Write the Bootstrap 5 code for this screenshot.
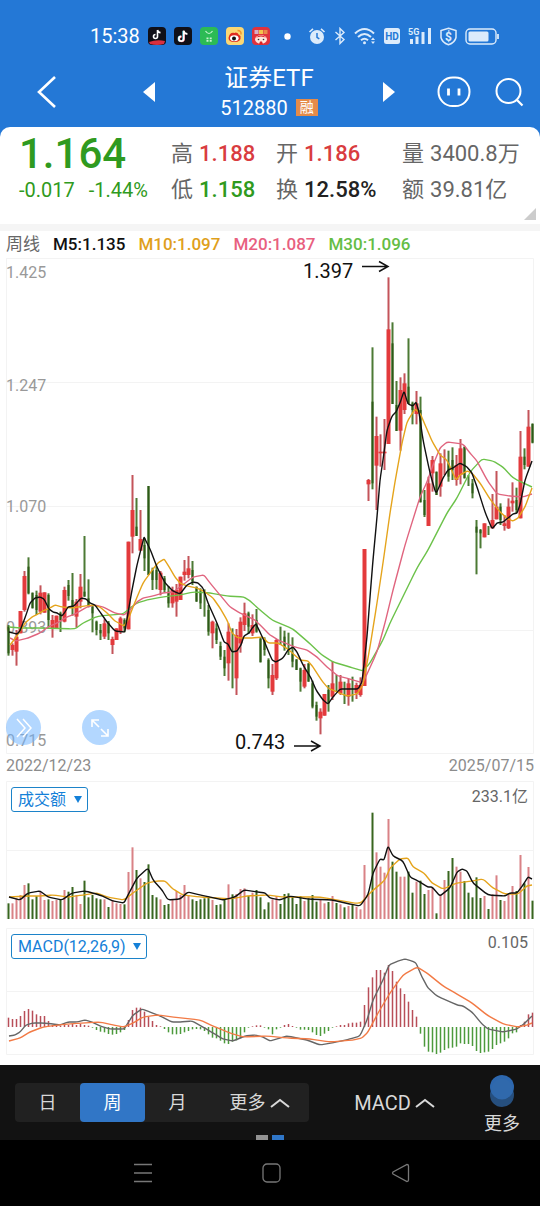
<!DOCTYPE html>
<html lang="zh-CN">
<head>
<meta charset="utf-8">
<meta name="viewport" content="width=device-width, initial-scale=1">
<title>证券ETF 512880</title>
<link href="https://cdn.jsdelivr.net/npm/bootstrap@5.3.0/dist/css/bootstrap.min.css" rel="stylesheet">
<style>
  :root { --blue: #2478d6; --up: #d93c40; --down: #2f9a20; }
  body { font-family: Roboto, "Noto Sans CJK SC", sans-serif; background: #fff; color: #222; line-height: 1.2; }
  svg { display: block; }
  button { background: none; border: 0; padding: 0; color: inherit; }
  .top-area { background: var(--blue); color: #fff; }
  .status { height: 56px; padding: 16px 41px 0 90px; font-size: 20px; }
  .status .apps { gap: 8px; margin-left: 8px; }
  .status .dot { margin-left: 14px; }
  .status .sys { color: #dcebfb; gap: 8px; }
  .title-bar { height: 71px; padding: 0 16px 0 36px; display: grid; grid-template-columns: 106px 1fr auto; }
  .title-bar .switcher { padding-right: 41px; }
  .title-bar h1 { font-size: 24px; line-height: 32px; }
  .code { font-size: 20px; line-height: 28px; }
  .tag { background: #e58b49; font-size: 14px; line-height: 17px; padding: 0 4px; }
  .quote { background: #fff; color: #222; border-radius: 10px 10px 0 0; height: 97px; padding: 5px 6px 0 19px; font-size: 22px;
    display: grid; grid-template-columns: 152fr 105fr 126fr 132fr; grid-template-rows: 44px 28px; align-items: center; font-weight: 500; }
  .quote dl { display: flex; align-items: center; gap: 6px; margin: 0; }
  .quote dt { font-weight: 400; color: #666; }
  .quote dd { margin: 0; white-space: nowrap; }
  .price { font-size: 42px; line-height: 44px; color: var(--down); }
  .change { font-size: 20px; gap: 14px; color: var(--down); font-weight: 400; }
  .up { color: var(--up); } .down { color: var(--down); } .dim { color: #666; font-weight: 400; }
  .corner { right: 4px; bottom: 4px; }
  .band { height: 7px; background: #f5f5f5; }
  .legend-row { height: 27px; padding: 0 6px; font-size: 17px; gap: 13px; font-weight: 500; white-space: nowrap; }
  .dates { height: 27px; padding: 0 6px 4px; font-size: 16px; color: #8c8c8c; }
  .round { width: 35px; height: 35px; border-radius: 50%; background: rgba(110,178,255,.52); display: grid; place-items: center; }
  .rounds { left: 6px; bottom: 9px; gap: 41px; }
  .picker { left: 11px; top: 6px; }
  .picker select { appearance: none; height: 25px; border: 1px solid #1c83c9; border-radius: 3px; background: #fff; color: #1480d8; font-size: 16px; line-height: 22px; padding: 0 20px 0 6px; }
  .picker svg { right: 6px; top: 9px; pointer-events: none; }
  .macd-wrap { margin-top: 9px; padding-bottom: 10px; }
  .axis { font-size: 16px; fill: #999; }
  .reading { font-size: 16px; fill: #666; text-anchor: end; }
  .callout { font-size: 20px; fill: #111; }
  .toolbar { background: #121212; color: #d8d8d8; height: 75px; padding: 0 16px 0 15px; font-size: 18px; }
  .seg { background: #212121; border-radius: 4px; height: 39px; width: 294px; }
  .seg button { flex: 65; border-radius: 4px; }
  .seg button:last-child { flex: 99; }
  .seg .current { background: #3176c6; color: #fff; }
  .ind { font-size: 20px; }
  .more { width: 44px; line-height: 22px; gap: 6px; padding-top: 4px; }
  .pages { gap: 4px; bottom: 0; }
  .pages i { width: 12px; height: 5px; background: #929292; }
  .pages i + i { background: #2f76c8; }
  .sysnav { background: #000; height: 66px; gap: 109px; padding-left: 4px; }
</style>
</head>
<body>
<div class="min-vh-100 d-flex flex-column">
<header class="top-area">
  <div class="status d-flex align-items-center">
    <span>15:38</span>
    <div class="apps d-flex">
      <svg width="18" height="18" viewBox="0 0 18 18"><rect width="18" height="18" rx="4" fill="#101018"/><path d="M9.5 3v6.5a2 2 0 1 1-2-2M9.5 3q.6 2.5 3 2.6" fill="none" stroke="#fff" stroke-width="1.6"/><path d="M1 15q8-3 16-1l-1 3q-7 2-14 0z" fill="#d93040"/></svg>
      <svg width="18" height="18" viewBox="0 0 18 18"><rect width="18" height="18" rx="4" fill="#101018"/><path d="M9.2 4v7.8a2.4 2.4 0 1 1-2.4-2.4" fill="none" stroke="#3ce" stroke-width="1.6"/><path d="M10.2 4v8a2.4 2.4 0 1 1-2.4-2.4" fill="none" stroke="#e45" stroke-width="1.6"/><path d="M9.7 3.5v8.3a2.4 2.4 0 1 1-2.4-2.4M9.7 4q.7 2.8 3.7 3" fill="none" stroke="#fff" stroke-width="1.8"/></svg>
      <svg width="18" height="18" viewBox="0 0 18 18"><rect width="18" height="18" rx="4" fill="#2cbb55"/><path d="M5.5 4q3.5 5 7 0" fill="none" stroke="#c8f3d2" stroke-width="1.2"/><path d="M6.5 10.500h2v1.800h-2zM9.700 10.500h2v1.800h-2zM6.500 13h2v1.800h-2zM9.700 13h2v1.800h-2z" fill="#c8f3d2"/></svg>
      <svg width="18" height="18" viewBox="0 0 18 18"><rect width="18" height="18" rx="4" fill="#fbd774"/><path d="M2.500 11q1-6 6-5 1-1 3 0 1 2 3 3 1 6-6 6-6 0-6-4" fill="#e02b20"/><ellipse cx="8.300" cy="11.300" rx="4.300" ry="3" fill="#fff"/><circle cx="8" cy="11.500" r="2" fill="#111"/><path d="M11.500 3.500q4 0 3.500 4" fill="none" stroke="#f0962a" stroke-width="1.500"/></svg>
      <svg width="18" height="18" viewBox="0 0 18 18"><rect width="18" height="18" rx="4" fill="#e0323e"/><path d="M2.500 3h4v4h-4z" fill="#d8b0c8"/><path d="M7 3h4v4H7z" fill="#f3c24c"/><path d="M11.500 3h4v4h-4z" fill="#e98a4a"/><ellipse cx="9" cy="12.500" rx="6" ry="4.200" fill="#ffe3dc"/><path d="M4 10.500q5-4 10 0l-5-1z" fill="#d22"/><path d="M8 14.500h2l1 3H7z" fill="#d22"/><circle cx="6.500" cy="12.500" r=".8" fill="#333"/><circle cx="11.500" cy="12.500" r=".8" fill="#333"/></svg>
    </div>
    <svg class="dot" width="7" height="7" viewBox="0 0 7 7"><circle cx="3.500" cy="3.500" r="3.200" fill="#fff"/></svg>
    <div class="sys d-flex align-items-center ms-auto">
      <svg width="18" height="18" viewBox="0 0 18 18"><circle cx="9" cy="10" r="7" fill="currentColor"/><path d="M1.500 5 5 1.800M16.500 5 13 1.800" stroke="currentColor" stroke-width="1.600"/><path d="M9 6v4.300l2.300 1.500" fill="none" stroke="#2478d6" stroke-width="1.500"/></svg>
      <svg width="12" height="18" viewBox="0 0 12 18"><path d="M1.500 5 10 12.500 6 16.500v-15L10 5.500 1.500 13" fill="none" stroke="currentColor" stroke-width="1.400"/></svg>
      <svg width="22" height="18" viewBox="0 0 22 18" fill="none" stroke="currentColor" stroke-width="2"><path d="M1 6.500q9.500-9 19 0M4 10q6.500-6 13 0M7 13.200q3.500-3 7 0"/><circle cx="10.500" cy="15.700" r="1.500" fill="currentColor" stroke="none"/><path d="m17 13 2-2.500 2 2.500zM17 14.500l2 2.500 2-2.500z" fill="currentColor" stroke="none"/></svg>
      <svg width="16" height="16" viewBox="0 0 16 16"><rect width="16" height="16" rx="2.500" fill="currentColor"/><text x="8" y="12" text-anchor="middle" font-size="10" font-weight="700" fill="#2478d6">HD</text></svg>
      <svg width="24" height="18" viewBox="0 0 24 18" fill="currentColor"><text x="0" y="8" font-size="9" font-weight="700">5G</text><path d="M2 12h3v5H2zM7.500 9.500h3V17h-3zM13.500 5h3v12h-3zM20 1h3v16h-3z"/></svg>
      <svg width="17" height="19" viewBox="0 0 17 19"><path d="M8.500 1.200 16 3.500v7q-1 5-7.500 7.300Q2 15.500 1 10.500v-7z" fill="none" stroke="currentColor" stroke-width="1.500"/><text x="8.500" y="13.500" text-anchor="middle" font-size="12" font-weight="700" fill="currentColor">$</text></svg>
      <svg width="34" height="17" viewBox="0 0 34 17"><rect x="1" y="1" width="30" height="15" rx="4" fill="none" stroke="currentColor" stroke-width="1.400"/><rect x="3.500" y="3.500" width="20" height="10" rx="1.500" fill="currentColor"/><path d="M33 6v5" stroke="currentColor" stroke-width="1.800"/></svg>
    </div>
  </div>
  <nav class="title-bar align-items-center">
    <button aria-label="返回"><svg width="22" height="34" viewBox="0 0 22 34"><path d="M19 2 3 17l16 15" fill="none" stroke="#fff" stroke-width="2.600"/></svg></button>
    <div class="switcher d-flex align-items-center justify-content-between">
      <button aria-label="上一个"><svg width="14" height="20" viewBox="0 0 14 20"><path d="M13 0v20L1 10z" fill="#fff"/></svg></button>
      <div class="text-center">
        <h1 class="m-0 fw-normal">证券ETF</h1>
        <div class="code d-flex align-items-center justify-content-center gap-2"><span>512880</span><span class="tag">融</span></div>
      </div>
      <button aria-label="下一个"><svg width="14" height="20" viewBox="0 0 14 20"><path d="M1 0v20l12-10z" fill="#fff"/></svg></button>
    </div>
    <div class="d-flex align-items-center gap-4">
      <button aria-label="助手"><svg width="34" height="32" viewBox="0 0 34 32"><rect x="1.500" y="1.500" width="31" height="28.500" rx="14.200" fill="none" stroke="#fff" stroke-width="2"/><path d="M11.500 12.500v7M22 12.500v7" stroke="#fff" stroke-width="2.800"/></svg></button>
      <button aria-label="搜索"><svg width="29" height="30" viewBox="0 0 29 30"><circle cx="13.500" cy="14" r="12" fill="none" stroke="#fff" stroke-width="2"/><path d="m21.500 22.500 6 6" stroke="#fff" stroke-width="2.200"/></svg></button>
    </div>
  </nav>
  <section class="quote position-relative">
    <div class="price">1.164</div>
    <dl><dt>高</dt><dd class="up">1.188</dd></dl>
    <dl><dt>开</dt><dd class="up">1.186</dd></dl>
    <dl><dt>量</dt><dd class="dim">3400.8万</dd></dl>
    <div class="change d-flex"><span>-0.017</span><span>-1.44%</span></div>
    <dl><dt>低</dt><dd class="down">1.158</dd></dl>
    <dl><dt>换</dt><dd>12.58%</dd></dl>
    <dl><dt>额</dt><dd class="dim">39.81亿</dd></dl>
    <svg class="corner position-absolute" width="12" height="12" viewBox="0 0 12 12"><path d="M12 0v12H0z" fill="#ccc"/></svg>
  </section>
</header>
<div class="band"></div>
<main>
  <div class="legend-row d-flex align-items-center">
    <span class="dim">周线</span><span style="color:#111">M5:1.135</span><span style="color:#dfa01c">M10:1.097</span><span style="color:#e8607f">M20:1.087</span><span style="color:#65bd45">M30:1.096</span>
  </div>
  <section class="position-relative">
    <svg id="kline" class="w-100" viewBox="0 258 540 496" role="img" aria-label="周线K线图">
      <path d="M6.500 258v495.500h527V258.500H6M6.500 382.500h527M6.500 506.500h527M6.500 630.500h527" fill="none" stroke="#f3f3f3"/>
      <g class="axis"><text x="6" y="278">1.425</text><text x="6" y="391">1.247</text><text x="6" y="512">1.070</text><text x="6" y="633">0.893</text><text x="6" y="746">0.715</text></g>
      <g class="callout"><text x="303" y="278">1.397</text><text x="235" y="749">0.743</text></g>
      <path d="M362 266.500h26m-9-5 9 5-9 5M294 746h26m-9-5 9 5-9 5" fill="none" stroke="#111" stroke-width="1.500"/>
    </svg>
    <div class="rounds position-absolute d-flex">
      <button class="round" aria-label="展开"><svg width="20" height="22" viewBox="0 0 20 22" fill="none" stroke="#fff" stroke-width="1.500"><path d="m3 2 8 9-8 9M9 2l8 9-8 9"/></svg></button>
      <button class="round" aria-label="全屏"><svg width="20" height="20" viewBox="0 0 20 20" fill="none" stroke="#fff" stroke-width="1.600"><path d="M2 9V2h7M2 2l7 7M18 11v7h-7M18 18l-7-7"/></svg></button>
    </div>
  </section>
  <div class="dates d-flex justify-content-between align-items-center"><span>2022/12/23</span><span>2025/07/15</span></div>
  <section class="position-relative">
    <svg id="volume" class="w-100" viewBox="0 781 540 138" role="img" aria-label="成交额">
      <path d="M6.500 919V781.500h527V919M6.500 850.500h527" fill="none" stroke="#f3f3f3"/>
      <text class="reading" x="528" y="802">233.1亿</text>
    </svg>
    <div class="picker position-absolute"><select aria-label="副图指标一"><option>成交额</option></select><svg class="position-absolute" width="8" height="7" viewBox="0 0 8 7"><path d="M0 0h8L4 7z" fill="#1480d8"/></svg></div>
  </section>
  <section class="macd-wrap position-relative">
    <svg id="macd" class="w-100" viewBox="0 928 540 127" role="img" aria-label="MACD">
      <path d="M6.500 928.500h527v126H6.500zM6.500 991.500h527" fill="none" stroke="#f3f3f3"/>
      <text class="reading" x="528" y="948">0.105</text>
    </svg>
    <div class="picker position-absolute"><select aria-label="副图指标二"><option>MACD(12,26,9)</option></select><svg class="position-absolute" width="8" height="7" viewBox="0 0 8 7"><path d="M0 0h8L4 7z" fill="#1480d8"/></svg></div>
  </section>
</main>
<footer class="mt-auto">
  <div class="toolbar d-flex align-items-center justify-content-between position-relative">
    <div class="seg d-flex">
      <button>日</button><button class="current">周</button><button>月</button>
      <button class="d-flex align-items-center justify-content-center gap-1">更多<svg width="20" height="12" viewBox="0 0 20 12"><path d="m1 10 9-7 9 7" fill="none" stroke="#d8d8d8" stroke-width="2"/></svg></button>
    </div>
    <button class="ind d-flex align-items-center gap-1">MACD<svg width="20" height="12" viewBox="0 0 20 12"><path d="m1 10 9-7 9 7" fill="none" stroke="#d8d8d8" stroke-width="2"/></svg></button>
    <button class="more d-flex flex-column align-items-center"><svg width="24" height="32" viewBox="0 0 24 32"><circle cx="12" cy="20" r="12" fill="#264f7e"/><circle cx="12" cy="12" r="12" fill="#2d67ae"/><circle cx="12" cy="14" r="10.500" fill="#3069ac"/></svg>更多</button>
    <div class="pages position-absolute start-50 translate-middle-x d-flex"><i></i><i></i></div>
  </div>
  <nav class="sysnav d-flex align-items-center justify-content-center">
    <button aria-label="菜单"><svg width="20" height="20" viewBox="0 0 20 20"><path d="M1 1.500h18M1 10h18M1 18.500h18" stroke="#777" stroke-width="1.300"/></svg></button>
    <button aria-label="主页"><svg width="20" height="20" viewBox="0 0 20 20"><rect x="1" y="1" width="17" height="18" rx="4" fill="none" stroke="#777" stroke-width="1.300"/></svg></button>
    <button aria-label="后退"><svg width="20" height="20" viewBox="0 0 20 20"><path d="M16 1.500q1.500 0 1.500 1.500v14q0 1.500-1.500 1.500L2 11q-1-1 0-2z" fill="none" stroke="#777" stroke-width="1.300"/></svg></button>
  </nav>
</footer>
</div>
<script src="https://cdn.jsdelivr.net/npm/bootstrap@5.3.0/dist/js/bootstrap.bundle.min.js"></script>
<script>
// Candles: colour, high, low, body top, body bottom, in thirds of a unit below each block's top.
const blocks = [
  [470, `g 465 557 470 550,r 520 557 525 540,r 480 587 500 545,r 423 490,r 303 425 318 420,g 262 373 290 370,g 368 415,g 362 435 375 420,r 346 433 368 425,r 367 428,g 370 473 375 450,r 435 503 450 475,r 437 475,g 425 486 430 450,r 350 457 360 455,g 330 392 345 378,g 309 437 390 410,r 387 473 395 440,r 312 415 350 395,g 198 380 365 380,g 328 412 385 405,g 405 487 410 430,g 452 496 455 480,g 462 510 480 490,r 448 507 460 500,g 453 510 458 490,r 500 552 507 525,r 475 510,r 440 492 445 485,g 445 487 450 475,r 215 478,r 15 250 120 200,g 84 198 170 198,r 120 242 207 242,g 205 303 225 265,g 48 315,g 293 360 300 330,g 290 358 300 330,r 303 376 308 360,g 318 367 325 360,g 348 413 365 400,r 350 413 360 400,r 342 440 360 395`],
  [560, `r 50 120,r 0 62 35 45,r -12 55 25 45,g 3 75 30 65,g 80 125,g 85 147 95 130,g 88 170 100 100,g 135 227 150 215,r 182 265 185 220,g 190 252 205 240,g 245 300 258 290,g 270 348 290 325,r 190 362 215 310,g 205 385 240 240,r 207 405 225 355,r 172 278 185 250,r 128 213 160 195,g 155 222 160 200,r 163 228 195 220,g 147 218 180 215,g 235 307,g 232 287 240 270,g 295 385 300 355,r 312 405 345 395,r 237 360 240 355,g 200 255 210 210,g 212 272 230 262,g 218 285 230 230,g 232 322 280 305,g 298 330,g 323 395 325 365,r 312 385 330 380,g 310 365,g 362 445 370 440,g 425 482 435 470,r 445 523 455 475,r 402 467,g 375 455 390 430,r 303 420 370 410,g 345 395 350 350,r 345 405 365 400,g 365 432 370 370,r 357 437 370 410,g 350 425 360 360,r 368 417 375 400,r 352 410 375 405,r -33 378`],
  [260, `r 657 723 660 673,g 262 688 425 670,r 470 750 528 617,r 523 620 575 580,r 477 630 575 580,r 52 552 208 552,g 187 432 250 432,g 363 513 435 513,r 352 572 390 512,r 340 462 370 450,g 235 432 380 432,g 425 493 430 450,r 393 493 430 462,g 410 727 450 727,g 690 771 720 765,r 650 798 670 798,r 588 695 600 640,g 635 705,r 580 710 610 680,r 568 645 600 600,g 572 665 610 650,g 562 660 600 630,r 585 677 615 660,r 537 673 565 645,g 560 655,g 645 678 655 655,g 657 715 670 700`],
  [480, `g 120 283 140 158,g 147 205 150 160,r 130 172,g 138 165 145 145,r 42 145 120 145,r -27 118 80 118,g 70 135 80 120,r 105 152 130 138,r 55 147 80 145,r 7 95 62 70,g 23 100 60 90,r -147 115 -70 115,g -95 -32 -70 -45,r -210 -40 -160 -40,g -170 -110 -168 -112`]
];
const candles = blocks.flatMap(([top, rows]) => rows.split(',').map(r => {
  const [c, ...v] = r.split(' ');
  const y = v.map(n => top + n / 3);
  return { c, hi: y[0], lo: y[1], a: y[2] ?? y[0], b: y[3] ?? y[1] };
}));
const NS = 'http://www.w3.org/2000/svg';
const add = (id, tag, attrs) => {
  const el = document.createElementNS(NS, tag);
  for (const k in attrs) el.setAttribute(k, attrs[k]);
  document.getElementById(id).appendChild(el);
};
const bar = (id, i, y1, y2, w, fill) => add(id, 'rect', { x: 8.5 + 4 * i - w / 2, y: Math.min(y1, y2), width: w, height: Math.abs(y2 - y1), fill });
// Line through "x,y" points, its corners slightly rounded.
const line = (id, pts, stroke, w = 1.4) => {
  const p = pts.trim().split(/\s+/).map(s => s.split(',').map(Number));
  const mix = (a, b, t) => [a[0] + (b[0] - a[0]) * t, a[1] + (b[1] - a[1]) * t];
  let d = `M${p[0]}`;
  for (let i = 1; i < p.length - 1; i++) d += `L${mix(p[i], p[i - 1], .2)}Q${p[i]} ${mix(p[i], p[i + 1], .2)}`;
  add(id, 'path', { d: d + `L${p[p.length - 1]}`, fill: 'none', stroke, 'stroke-width': w, 'stroke-linejoin': 'round' });
};
candles.forEach((k, i) => {
  const g = k.c === 'g';
  bar('kline', i, k.hi, k.lo, 2, g ? '#4c7a35' : '#c4545a');
  bar('kline', i, k.a, k.b, g ? 2 : 4, g ? '#2d5a17' : '#e33a3c');
});
line('kline', '9,627 20,628 43,628 75,629 83,623 98,616 123,614 130,608 137,603 147,600 162,597 180,595 193,592 210,593 227,596 244,597 250,601 260,610 272,620 293,629 308,642 322,655 333,662 350,667 363,671 370,663 383,640 390,623 417,568 428,550 447,513 457,498 470,472 482,459 493,461 503,467 513,478 532,487', '#6cc24a');
line('kline', '10,638 16,641 28,638 40,633 48,627 57,623 67,617 75,614 87,607 95,605 103,607 115,613 124,615 130,610 137,602 143,598 153,596 163,593 173,592 180,587 193,577 204,575 210,583 220,595 230,607 240,613 255,620 262,627 270,635 280,641 295,647 307,650 317,657 327,667 338,676 350,679 363,683 377,652 385,623 393,590 405,545 420,497 427,482 433,465 440,448 447,442 463,444 470,453 477,461 487,480 497,494 510,496 523,497 532,494', '#e0657f');
line('kline', '10,645 17,636 25,623 32,617 38,614 43,611 50,608 55,605 62,607 72,608 78,607 92,605 100,607 107,613 115,621 124,626 128,620 135,602 143,583 153,569 158,563 164,559 168,565 175,577 180,583 187,586 197,588 205,592 213,598 220,608 227,620 232,633 238,638 252,638 263,637 268,643 278,643 288,649 300,660 308,661 313,667 322,681 328,688 337,692 347,696 357,694 363,685 370,647 377,603 383,563 390,513 395,482 402,443 407,422 415,409 420,413 426,427 432,441 440,455 447,460 456,480 460,475 467,471 472,473 480,483 490,499 500,512 508,519 513,521 518,518 525,507 532,488', '#e5a41c');
line('kline', '9,632 17,634 20,631 26,615 30,603 35,598 40,597 44,599 49,609 53,612 57,613 62,616 65,612 68,607 74,606 81,598 86,599 90,603 95,605 100,612 107,622 115,631 124,632 125,631 128,613 132,590 137,565 144,537 145,539 150,549 157,567 165,583 173,591 180,594 187,585 193,582 198,583 203,588 208,603 217,623 224,642 228,644 232,652 237,651 241,645 244,636 249,633 253,627 256,624 260,632 265,643 272,660 276,662 283,658 288,650 293,647 297,652 303,665 311,678 316,690 323,700 328,704 333,697 340,689 350,689 358,689 362,682 367,637 370,597 373,560 377,517 380,480 383,460 387,430 392,416 396,412 400,403 404,391 408,404 413,406 416,402 419,412 423,440 430,473 436,494 443,478 448,470 453,468 460,463 467,467 472,473 478,490 485,512 492,529 497,523 503,522 508,518 513,514 517,513 520,505 525,480 532,461', '#111');

const vol = [400,400,385,375,345,340,388,378,367,390,388,393,390,388,360,365,351,375,402,332,382,375,385,388,388,411,390,400,402,403,306,232,300,325,336,283,375,382,388,405,402,388,363,375,345,375,388,393,388,385,380,390,405,403,390,343,373,372,357,355,378,368,360,382,418,397,388,378,402,372,370,380,402,378,393,385,375,395,388,400,396,378,399,403,412,408,405,410,418,285,375,128,247,290,308,147,275,305,320,320,305,368,335,332,372,360,352,430,375,330,303,264,290,305,333,368,382,322,384,378,417,373,316,390,393,375,348,363,255,340,291,392];
vol.forEach((v, i) => bar('volume', i, 770 + v / 3, 919, 2, candles[i]?.c === 'g' ? '#38661f' : '#d98286'));
line('volume', '9,897 27,896 40,896 53,895 68,897 83,895 97,893 107,897 124,900 133,893 147,883 157,881 165,881 173,889 183,895 200,897 217,898 230,899 247,896 267,895 283,897 320,897 360,904 370,893 385,880 390,868 400,859 408,858 413,867 424,873 432,883 443,889 457,883 472,881 483,879 493,888 505,894 518,894 527,886 532,885', '#e5a41c');
line('volume', '9,897 20,900 28,893 40,891 48,897 62,900 72,893 85,891 100,895 113,901 124,903 128,895 137,878 148,868 153,880 162,890 168,900 180,899 188,892 200,895 210,897 223,900 235,897 244,890 258,892 265,893 270,898 280,900 290,896 307,899 332,900 350,904 360,906 368,895 373,873 380,859 384,860 388,846 393,856 403,861 410,877 418,881 428,887 432,887 440,896 450,888 457,872 462,869 467,871 473,883 488,895 505,896 510,893 517,893 523,885 528,877 532,879', '#111');

const hist = [278,282,282,273,258,252,257,268,273,273,288,300,300,302,300,300,297,300,297,300,302,308,315,320,322,327,329,327,322,315,285,255,248,248,260,275,288,300,304,312,322,328,328,327,322,318,313,312,313,318,328,338,340,347,355,357,350,346,340,322,308,304,301,301,308,313,328,313,308,300,297,303,308,314,314,315,322,330,333,326,318,308,304,300,300,295,293,293,290,240,187,157,135,135,143,120,138,170,190,207,230,255,275,326,365,380,382,387,383,375,370,368,365,355,357,357,363,378,384,382,380,372,360,355,350,340,325,322,300,290,268,263];
hist.forEach((v, i) => bar('macd', i, 1027, 925 + v / 3, 1.5, v > 306 ? '#4c9a3c' : '#b84e58'));
line('macd', '9,1036 15,1035 20,1032 26,1025 33,1023 43,1023 53,1024 60,1025 68,1022 77,1022 85,1020 92,1022 100,1026 110,1029 124,1029 128,1023 133,1015 142,1009 150,1012 160,1016 172,1022 180,1022 192,1021 203,1027 213,1033 223,1039 233,1041 245,1036 255,1035 263,1037 270,1041 280,1038 287,1036 307,1040 320,1045 337,1042 350,1039 360,1036 367,1020 373,1000 383,980 389,965 398,961 405,959 412,961 416,963 422,977 428,988 437,996 457,1005 463,1006 472,1012 482,1024 488,1029 503,1032 517,1029 525,1023 532,1016', '#666');
line('macd', '9,1041 20,1038 30,1032 43,1027 67,1024 100,1022 113,1025 124,1027 133,1023 143,1017 158,1015 173,1017 200,1020 213,1026 230,1033 243,1037 267,1036 287,1038 310,1039 330,1042 353,1040 362,1038 368,1032 378,1013 390,993 403,975 417,967 427,973 443,986 457,994 472,1003 487,1015 503,1024 518,1027 527,1025 532,1023', '#f27a45');
</script>
</body>
</html>
